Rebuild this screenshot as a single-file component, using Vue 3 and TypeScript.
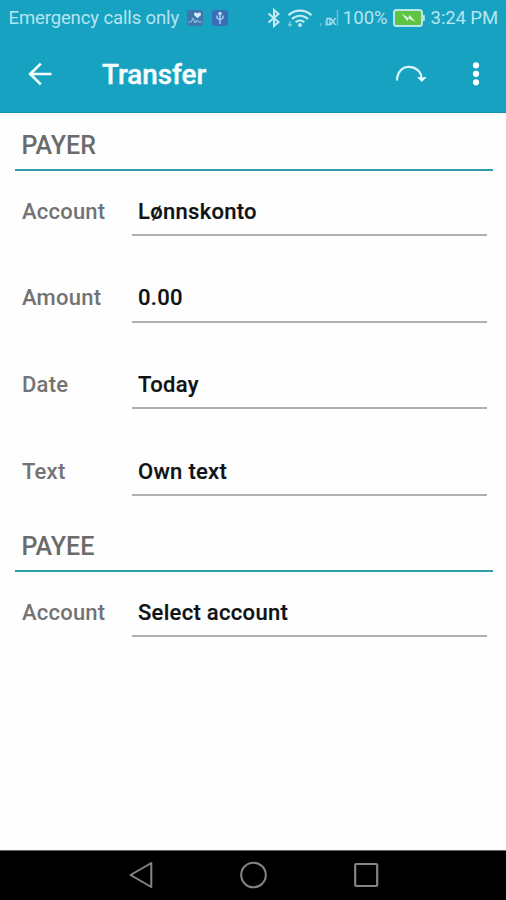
<script setup lang="ts">
interface Field {
  label: string
  value: string
}
interface Section {
  title: string
  fields: Field[]
}

const sections: Section[] = [
  {
    title: 'PAYER',
    fields: [
      { label: 'Account', value: 'Lønnskonto' },
      { label: 'Amount', value: '0.00' },
      { label: 'Date', value: 'Today' },
      { label: 'Text', value: 'Own text' },
    ],
  },
  { title: 'PAYEE', fields: [{ label: 'Account', value: 'Select account' }] },
]
</script>

<template>
  <div class="screen">
    <div class="status">
      <span class="carrier">Emergency calls only</span>
      <svg class="health" width="16" height="16" viewBox="0 0 16 16">
        <rect width="16" height="16" rx="2" fill="#3f76ad" />
        <path d="M10.5 8.3 7.3 5.2C6 3.3 8.9 1.3 10.5 3.5c1.6-2.2 4.5-.2 3.2 1.7Z" fill="#d5effa" />
        <path d="M1 12h3l2-3.5 2 4 2-2 2 1.5h3" fill="none" stroke="#8fc0dd" stroke-width="1.1" />
      </svg>
      <svg class="usb" width="16" height="16" viewBox="0 0 16 16">
        <rect width="16" height="16" rx="2" fill="#3a6fb8" />
        <path d="M8 14V3M5 5.5V8l3 2 3-2V5.5" fill="none" stroke="#a9d2ef" stroke-width="1.4" />
        <circle cx="8" cy="3.5" r="1.7" fill="#c3e3f6" />
      </svg>
      <span class="spacer"></span>
      <svg class="bt" width="14" height="20" viewBox="0 0 14 20">
        <path d="M1.5 5.5 11.5 14 7 18V2l4.500 4L1.500 14.500" fill="none" stroke="#c5ecf6" stroke-width="2" />
      </svg>
      <svg class="wifi" width="26" height="20" viewBox="0 0 26 20">
        <g fill="none" stroke="#c5ecf6" stroke-width="2.2">
          <path d="M1.5 7.300a16.500 16.500 0 0 1 23 0" />
          <path d="M5 11a11.500 11.500 0 0 1 16 0" />
          <path d="M8.700 14.200a6.300 6.300 0 0 1 8.600 0" />
        </g>
        <circle cx="13" cy="17" r="1.900" fill="#c5ecf6" />
        <path d="M3 13v5M1 16l2 2 2-2" fill="none" stroke="#7ccbe0" stroke-width="1.300" />
      </svg>
      <svg class="signal" width="20" height="18" viewBox="0 0 20 18">
        <path d="M1.500 14v3M7 11v6M18.500 1v16" stroke="#65bfd7" stroke-width="1.500" />
        <path d="M8 9.500h3v6H8ZM11.500 9l5 7M16.500 9l-5 7" fill="none" stroke="#a6deed" stroke-width="1.300" />
      </svg>
      <span class="percent">100%</span>
      <svg class="battery" width="32" height="18" viewBox="0 0 32 18">
        <rect x="1" y="1" width="28" height="16" rx="2.500" fill="#5fc442" stroke="#b9e6ee" stroke-width="2" />
        <path d="M30.800 6v6" stroke="#b9e6ee" stroke-width="2" />
        <path d="m8.500 4.500 7 4.500 1-3.300 6 7.300-7-3.500-1 2.800Z" fill="#e5f8e7" />
      </svg>
      <span class="clock">3:24 PM</span>
    </div>

    <header class="toolbar">
      <svg class="back" width="24" height="24" viewBox="0 0 24 24">
        <path d="M23.500 12H2M12.800 1.600 2.200 12l10.600 10.400" fill="none" stroke="#f1fcff" stroke-width="2.700" />
      </svg>
      <h1>Transfer</h1>
      <span class="spacer"></span>
      <svg class="redo" width="32" height="18" viewBox="0 0 32 18">
        <path d="M2 15.500C2 7 7.500 1.800 13.800 1.800S26.300 6 26.500 13" fill="none" stroke="#d8f5fb" stroke-width="2.200" />
        <path d="M23 12.500q4 1.500 8-.200l-4.200 4.200Z" fill="#effcff" stroke="#effcff" stroke-linejoin="round" />
      </svg>
      <svg class="more" width="8" height="24" viewBox="0 0 8 24">
        <g fill="#fff">
          <circle cx="4" cy="3.300" r="3.100" />
          <circle cx="4" cy="11.800" r="3.100" />
          <circle cx="4" cy="20.300" r="3.100" />
        </g>
      </svg>
    </header>

    <main>
      <section v-for="section in sections" :key="section.title">
        <h2>{{ section.title }}</h2>
        <div class="fields">
          <div v-for="field in section.fields" :key="field.label" class="field">
            <span class="label">{{ field.label }}</span>
            <span class="value">{{ field.value }}</span>
          </div>
        </div>
      </section>
    </main>

    <nav>
      <svg width="26" height="28" viewBox="0 0 26 28">
        <path d="M24.300 2v24L3.500 14Z" fill="none" stroke="#858585" stroke-width="2" stroke-linejoin="round" />
      </svg>
      <svg width="28" height="28" viewBox="0 0 28 28">
        <circle cx="14.500" cy="14" r="12.300" fill="none" stroke="#858585" stroke-width="2" />
      </svg>
      <svg width="26" height="28" viewBox="0 0 26 28">
        <rect x="2.200" y="3" width="22" height="22" rx="1" fill="none" stroke="#858585" stroke-width="2.200" />
      </svg>
    </nav>
  </div>
</template>

<style>
body {
  margin: 0;
  background: #fff;
}
</style>

<style scoped>
.screen {
  display: flex;
  flex-direction: column;
  width: 506px;
  height: 900px;
  background: #fefefe;
  font-family: Roboto, sans-serif;
  overflow: hidden;
}
svg {
  display: block;
  flex: none;
}
.spacer {
  flex: 1;
}
.status {
  display: flex;
  align-items: center;
  box-sizing: border-box;
  height: 36px;
  padding: 0 8px;
  background: #18a2c1;
  color: #b5e5f1;
  font-size: 18.5px;
  line-height: 36px;
  white-space: nowrap;
}
.carrier {
  margin-left: 0.5px;
  letter-spacing: -0.12px;
}
.health {
  margin-left: 8px;
}
.usb {
  margin-left: 9px;
}
.wifi {
  margin-left: 6px;
}
.signal {
  margin-left: 6px;
}
.percent {
  margin-left: 4px;
}
.battery {
  margin-left: 5px;
}
.clock {
  margin-left: 6px;
  letter-spacing: -0.1px;
}
.toolbar {
  display: flex;
  align-items: center;
  box-sizing: border-box;
  height: 77px;
  padding: 0 26px 0 28px;
  background: #18a2c1;
  border-bottom: 1px solid #1690ad;
}
h1 {
  margin: 1px 0 0 50px;
  color: #f6fdff;
  font-size: 27.8px;
  font-weight: 500;
  line-height: 36px;
  -webkit-text-stroke: 0.4px currentColor;
}
.redo {
  margin-right: 45px;
}
main {
  flex: 1;
}
h2 {
  box-sizing: border-box;
  height: 58px;
  margin: 0 13.5px 0 14.5px;
  padding: 16px 7px 0;
  border-bottom: 2px solid #2f9cab;
  color: #6b6b6b;
  font-size: 25px;
  font-weight: 500;
  line-height: 34px;
}
.fields {
  display: flex;
  flex-direction: column;
  gap: 22px;
  padding: 0 19px 18px 22px;
}
.field {
  display: flex;
  height: 64.8px;
  font-size: 22px;
  font-weight: 500;
  line-height: 34px;
}
.label {
  box-sizing: border-box;
  width: 110px;
  padding-top: 23.6px;
  color: #737373;
  letter-spacing: 0.22px;
}
.value {
  flex: 1;
  box-sizing: border-box;
  padding: 23.6px 0 0 6px;
  border-bottom: 2px solid #b0b0b0;
  color: #101314;
  letter-spacing: 0.3px;
  -webkit-text-stroke: 0.2px currentColor;
}
nav {
  display: flex;
  align-items: center;
  justify-content: center;
  gap: 86px;
  box-sizing: border-box;
  height: 50px;
  padding-bottom: 1px;
  background: #000;
  border-top: 1px solid #666;
}
</style>
